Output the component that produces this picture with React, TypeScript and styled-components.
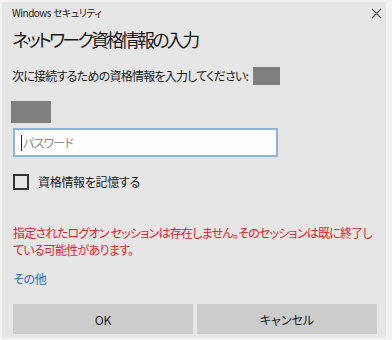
import styled, { createGlobalStyle } from 'styled-components';

const GlobalStyle = createGlobalStyle`
  html, body {
    margin: 0;
    padding: 0;
    background: #f3f3f3;
  }
  body {
    font-family: "Noto Sans CJK JP", "Noto Sans", sans-serif;
    font-feature-settings: "palt";
  }
`;

const Dialog = styled.div`
  width: 384px;
  min-height: 336px;
  margin: 2px 0 0 2px;
  background: #e6e6e6;
  box-sizing: border-box;
  padding: 0 9px 4px 9px;
  display: flex;
  flex-direction: column;
  align-items: flex-start;
  color: #1a1a1a;

  & > * {
    flex-shrink: 0;
  }
`;

const Header = styled.div`
  align-self: stretch;
  display: flex;
  justify-content: space-between;
  align-items: center;
  height: 22px;
  padding-left: 1px;
  margin-right: -6px;
`;

const Caption = styled.span`
  font-size: 10px;
  line-height: 14px;
  letter-spacing: -0.5px;
  color: #222;
`;

const CloseButton = styled.button`
  border: none;
  background: transparent;
  padding: 0;
  width: 14px;
  height: 14px;
  margin-top: 1px;
  display: flex;
  align-items: center;
  justify-content: center;
`;

const Title = styled.h1`
  margin: 2px 0 0 1px;
  font-size: 18px;
  line-height: 26px;
  letter-spacing: -2.7px;
  font-weight: 400;
  color: #1a1a1a;
`;

const Prompt = styled.div`
  margin: 15px 0 0 1px;
  display: flex;
  align-items: center;
  gap: 5px;
  font-size: 12px;
  line-height: 18px;
  letter-spacing: -0.75px;
`;

const Redacted = styled.span<{ $w: number; $h: number }>`
  display: block;
  width: ${(p) => p.$w}px;
  height: ${(p) => p.$h}px;
  background: #7f7f7f;
`;

const UserBox = styled(Redacted)`
  margin-top: 16px;
`;

const PasswordField = styled.div`
  margin: 5px 0 0 2px;
  width: 265px;
  height: 29px;
  box-sizing: border-box;
  border: 2px solid #8cb5d9;
  background: #fff;
  display: flex;
  align-items: center;
  padding-left: 6px;
`;

const Caret = styled.span`
  width: 1px;
  height: 16px;
  background: #222;
  margin-right: 1px;
`;

const Placeholder = styled.span`
  font-size: 12px;
  letter-spacing: -0.8px;
  color: #8a8a8a;
`;

const CheckRow = styled.label`
  margin: 16px 0 0 2px;
  display: flex;
  align-items: center;
  gap: 9px;
  font-size: 12px;
  line-height: 18px;
  letter-spacing: -0.3px;
`;

const Box = styled.span`
  width: 16px;
  height: 16px;
  box-sizing: border-box;
  border: 2px solid #333;
`;

const ErrorText = styled.p`
  margin: 33px 0 0 2px;
  font-size: 12px;
  line-height: 17px;
  letter-spacing: -0.75px;
  white-space: nowrap;
  color: #d9262e;
`;

const MoreLink = styled.a`
  margin: 12px 0 0 2px;
  font-size: 12px;
  line-height: 18px;
  letter-spacing: -0.3px;
  color: #1f6fc0;
  text-decoration: none;
`;

const Buttons = styled.div`
  margin: 16px 0 0 2px;
  display: grid;
  grid-template-columns: 180px 180px;
  gap: 4px;
`;

const Button = styled.button`
  height: 30px;
  border: none;
  background: #cccccc;
  font-family: "Noto Sans CJK JP", "Noto Sans", sans-serif;
  font-feature-settings: "palt";
  font-size: 12px;
  color: #1a1a1a;
`;

export default function App() {
  return (
    <>
      <GlobalStyle />
      <Dialog>
        <Header>
          <Caption>Windows セキュリティ</Caption>
          <CloseButton aria-label='閉じる'>
            <svg width='11' height='11' viewBox='0 0 11 11'>
              <path d='M1 1L10 10M10 1L1 10' stroke='#555' strokeWidth='1.1' />
            </svg>
          </CloseButton>
        </Header>
        <Title>ネットワーク資格情報の入力</Title>
        <Prompt>
          次に接続するための資格情報を入力してください:
          <Redacted $w={27} $h={18} />
        </Prompt>
        <UserBox $w={40} $h={22} />
        <PasswordField>
          <Caret />
          <Placeholder>パスワード</Placeholder>
        </PasswordField>
        <CheckRow>
          <Box />
          資格情報を記憶する
        </CheckRow>
        <ErrorText>
          指定されたログオン セッションは存在しません。そのセッションは既に終了し
          <br />
          ている可能性があります。
        </ErrorText>
        <MoreLink href='#'>その他</MoreLink>
        <Buttons>
          <Button>OK</Button>
          <Button>キャンセル</Button>
        </Buttons>
      </Dialog>
    </>
  );
}
